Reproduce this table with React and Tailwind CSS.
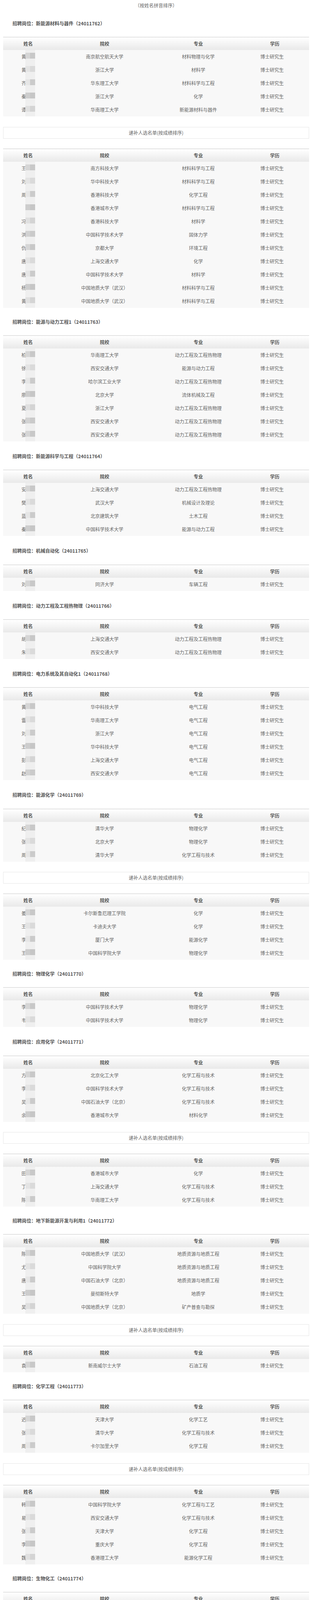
import React from "react";

const D = "博士研究生";
const M = "硕士研究生";

const blocks = [
  {
    h: "招聘岗位：新能源材料与器件（24011762）",
    t: [
      ["黄", "南京航空航天大学", "材料物理与化学", D],
      ["黄", "浙江大学", "材料学", D],
      ["齐", "华东理工大学", "材料科学与工程", D],
      ["秦", "浙江大学", "化学", D],
      ["谭", "华南理工大学", "新能源材料与器件", D],
    ],
    a: [
      ["王", "南方科技大学", "材料科学与工程", D],
      ["刘", "华中科技大学", "材料科学与工程", D],
      ["周", "香港科技大学", "化学工程", D],
      ["", "香港城市大学", "材料科学与工程", D],
      ["冯", "香港科技大学", "材料学", D],
      ["洪", "中国科学技术大学", "固体力学", D],
      ["仇", "京都大学", "环境工程", D],
      ["唐", "上海交通大学", "化学", D],
      ["唐", "中国科学技术大学", "材料学", D],
      ["杨", "中国地质大学（武汉）", "材料科学与工程", D],
      ["黄", "中国地质大学（武汉）", "材料科学与工程", D],
    ],
  },
  {
    h: "招聘岗位：能源与动力工程1（24011763）",
    t: [
      ["柏", "华南理工大学", "动力工程及工程热物理", D],
      ["徐", "西安交通大学", "能源与动力工程", D],
      ["李", "哈尔滨工业大学", "动力工程及工程热物理", D],
      ["廖", "北京大学", "流体机械及工程", D],
      ["夏", "浙江大学", "动力工程及工程热物理", D],
      ["张", "西安交通大学", "动力工程及工程热物理", D],
      ["张", "西安交通大学", "动力工程及工程热物理", D],
    ],
  },
  {
    h: "招聘岗位：新能源科学与工程（24011764）",
    t: [
      ["安", "上海交通大学", "动力工程及工程热物理", D],
      ["樊", "武汉大学", "机械设计及理论", D],
      ["蓝", "北京建筑大学", "土木工程", D],
      ["秦", "中国科学技术大学", "能源与动力工程", D],
    ],
  },
  {
    h: "招聘岗位：机械自动化（24011765）",
    t: [["刘", "同济大学", "车辆工程", D]],
  },
  {
    h: "招聘岗位：动力工程及工程热物理（24011766）",
    t: [
      ["胡", "上海交通大学", "动力工程及工程热物理", D],
      ["朱", "西安交通大学", "动力工程及工程热物理", D],
    ],
  },
  {
    h: "招聘岗位：电力系统及其自动化1（24011768）",
    t: [
      ["黄", "华中科技大学", "电气工程", D],
      ["雷", "华南理工大学", "电气工程", D],
      ["刘", "浙江大学", "电气工程", D],
      ["王", "华中科技大学", "电气工程", D],
      ["彭", "上海交通大学", "电气工程", D],
      ["赵", "西安交通大学", "电气工程", D],
    ],
  },
  {
    h: "招聘岗位：能源化学（24011769）",
    t: [
      ["纪", "清华大学", "物理化学", D],
      ["张", "北京大学", "物理化学", D],
      ["周", "清华大学", "化学工程与技术", D],
    ],
    a: [
      ["姜", "卡尔斯鲁厄理工学院", "化学", D],
      ["王", "卡迪夫大学", "化学", D],
      ["李", "厦门大学", "能源化学", D],
      ["王", "中国科学院大学", "物理化学", D],
    ],
  },
  {
    h: "招聘岗位：物理化学（24011770）",
    t: [
      ["李", "中国科学技术大学", "物理化学", D],
      ["韦", "中国科学技术大学", "物理化学", D],
    ],
  },
  {
    h: "招聘岗位：应用化学（24011771）",
    t: [
      ["方", "北京化工大学", "化学工程与技术", D],
      ["李", "中国科学技术大学", "化学工程与技术", D],
      ["吴", "中国石油大学（北京）", "化学工程与技术", D],
      ["余", "香港城市大学", "材料化学", D],
    ],
    a: [
      ["田", "香港城市大学", "化学", D],
      ["丁", "上海交通大学", "化学工程与技术", D],
      ["陈", "华南理工大学", "化学工程与技术", D],
    ],
  },
  {
    h: "招聘岗位：地下新能源开发与利用1（24011772）",
    t: [
      ["陈", "中国地质大学（武汉）", "地质资源与地质工程", D],
      ["尤", "中国科学院大学", "地质资源与地质工程", D],
      ["唐", "中国石油大学（北京）", "地质资源与地质工程", D],
      ["王", "曼彻斯特大学", "地质学", D],
      ["吴", "中国地质大学（北京）", "矿产普查与勘探", D],
    ],
    a: [["袁", "新南威尔士大学", "石油工程", D]],
  },
  {
    h: "招聘岗位：化学工程（24011773）",
    t: [
      ["迟", "天津大学", "化学工艺", D],
      ["张", "清华大学", "化学工程与技术", D],
      ["周", "卡尔加里大学", "化学工程", D],
    ],
    a: [
      ["韩", "中国科学院大学", "化学工程与工艺", D],
      ["易", "西安交通大学", "化学工程与技术", D],
      ["张", "天津大学", "化学工程", D],
      ["李", "重庆大学", "化学工程", D],
      ["魏", "香港理工大学", "能源化学工程", D],
    ],
  },
  {
    h: "招聘岗位：生物化工（24011774）",
    t: [["杨", "香港科技大学", "化学工程与技术", D]],
  },
  {
    h: "招聘岗位：检测技术与自动化装置（24011775）",
    t: [["周", "北京化工大学", "检测技术与自动化装置", D]],
  },
  {
    h: "招聘岗位：人工智能（24011776）",
    t: [["马", "香港中文大学（深圳）", "计算机科学与技术", D]],
  },
  {
    h: "招聘岗位：土木工程（24011777）",
    t: [
      ["王", "曼彻斯特大学", "土木工程", D],
      ["张", "香港理工大学", "土木、水利与海洋工程", D],
    ],
  },
  {
    h: "招聘岗位：能源与动力工程2（24011778）",
    t: [
      ["李", "曼彻斯特大学", "动力工程及工程热物理", M],
      ["王", "华北电力大学", "能源与动力工程", M],
      ["颜", "长沙理工大学", "新能源科学与工程", M],
    ],
    a: [
      ["胡", "浙江大学", "动力工程及工程热物理", M],
      ["马", "西安交通大学", "动力工程及工程热物理", M],
      ["孙", "西安交通大学", "动力工程及工程热物理", M],
      ["蔡", "华中科技大学", "动力工程及工程热物理", M],
      ["张", "清华大学", "海洋资源与环境", M],
      ["马", "华北电力大学", "动力工程及工程热物理", M],
    ],
  },
  {
    h: "招聘岗位：材料科学与工程（24011779）",
    t: [
      ["李", "爱丁堡大学", "材料化学", M],
      ["刘", "天津大学", "化学工程", M],
      ["孟", "北京理工大学", "能源化学工程", M],
      ["王", "西北工业大学", "应用化学", M],
      ["熊", "多伦多大学", "材料科学与工程", M],
      ["赵", "新加坡国立大学", "材料科学与工程", M],
    ],
    a: [
      ["林", "天津大学", "化学工艺", M],
      ["周", "中国科学技术大学", "材料科学与工程", M],
      ["林", "华南理工大学", "物理化学", M],
    ],
  },
  {
    h: "招聘岗位：能源经济评价（24011780）",
    t: [["肖", "斯德哥尔摩经济学院", "经济学", M]],
    a: [
      ["田", "伦敦大学学院", "资源与环境经济学", M],
      ["谢", "华中科技大学", "能源经济", M],
    ],
  },
  {
    h: "招聘岗位：电力系统及其自动化2（24011782）",
    t: [
      ["黄", "华中科技大学", "电气工程", M],
      ["邱", "新疆大学", "电气工程", M],
      ["王", "南京师范大学", "电气工程", M],
    ],
    a: [
      ["田", "香港大学", "智慧能源工程", M, "昀"],
      ["杜", "伯明翰大学", "电气工程及其自动化", M],
      ["刘", "华北电力大学", "电气工程", M],
      ["郭", "西安交通大学", "电气工程", M],
      ["卢", "华中科技大学", "电气工程", M],
      ["定", "华中科技大学", "电气工程", M],
      ["温", "浙江大学", "能源与动力工程", M],
    ],
  },
];

const blurTones = [
  ["bg-[#d6d6d6]", "bg-[#c8c8c8]"],
  ["bg-[#e4e4e4]", "bg-[#dadada]"],
  ["bg-[#e6e6e6]", "bg-[#cbcbcb]"],
  ["bg-[#cdcdcd]", "bg-[#c6c6c6]"],
  ["bg-[#e0e0e0]", "bg-[#d4d4d4]"],
  ["bg-[#d2d2d2]", "bg-[#cacaca]"],
];

function NameCell({ row, i }) {
  const tone = blurTones[i % blurTones.length];
  const wide = row[4] !== undefined;
  return (
    <div className="relative h-full">
      <span
        className={`absolute top-0 h-full flex items-center ${wide ? "left-[40px]" : "left-[47px]"}`}
      >
        {row[0]}
      </span>
      {wide && (
        <span className="absolute top-0 h-full flex items-center left-[76px]">{row[4]}</span>
      )}
      <span className="absolute left-[57px] top-[7px] flex">
        <span className={`block w-[12px] h-[15px] ${tone[0]}`}></span>
        <span className={`block w-[13px] h-[15px] ${tone[1]}`}></span>
      </span>
    </div>
  );
}

function Table({ rows }) {
  return (
    <div className="border-t-2 border-[#e2e2e2]">
      <div className="grid grid-cols-[128px_264px_216px_176px] h-[32px] items-center text-center font-bold text-[#555] bg-gradient-to-b from-white to-[#e9e9e9]">
        <div>姓名</div>
        <div>院校</div>
        <div>专业</div>
        <div>学历</div>
      </div>
      <div className="relative bg-[#f8f8f8]">
        <div className="absolute left-[57px] top-0 bottom-0 w-[25px] bg-[#efefef]"></div>
        {rows.map((r, i) => (
          <div
            key={i}
            className="relative grid grid-cols-[128px_264px_216px_176px] h-[34px] items-center text-center text-[#666]"
          >
            <NameCell row={r} i={i} />
            <div>{r[1]}</div>
            <div>{r[2]}</div>
            <div className="pr-[14px]">{r[3]}</div>
          </div>
        ))}
      </div>
    </div>
  );
}

function Heading({ text, first }) {
  return (
    <div
      className={`${first ? "pt-[22px]" : "pt-[26px]"} pb-[24.3px] pl-[24px] leading-[20px] text-[12px] font-bold text-[#555]`}
    >
      {text}
    </div>
  );
}

function AltBox() {
  return (
    <div className="mt-[26.5px] mb-[25px] h-[30px] border border-[#e6e6e6] bg-white flex items-center justify-center text-[#666]">
      递补人选名单(按成绩排序)
    </div>
  );
}

const mosaicA = [
  "bg-[#5c5c5c]", "bg-[#7a7a7a]", "bg-[#6a6a6a]", "bg-[#848484]", "bg-[#707070]", "bg-[#8a8a8a]",
  "bg-[#787878]", "bg-[#808080]", "bg-[#6e6e6e]", "bg-[#888888]", "bg-[#7c7c7c]", "bg-[#858585]",
  "bg-[#7a7b74]", "bg-[#868780]", "bg-[#787872]", "bg-[#6c6c6c]", "bg-[#4c4c4c]", "bg-[#6f6f6f]",
  "bg-[#686868]", "bg-[#7e7e7e]", "bg-[#555555]", "bg-[#747474]", "bg-[#6a6a6a]", "bg-[#5e5e5e]",
  "bg-[#666666]", "bg-[#777777]", "bg-[#80808a]", "bg-[#727272]", "bg-[#5a5a5a]", "bg-[#6a6a6a]",
  "bg-[#747474]", "bg-[#6e6e6e]", "bg-[#646464]", "bg-[#707070]", "bg-[#6a6a6a]",
];
const mosaicB = [
  "bg-[#5e5e5e]", "bg-[#727272]", "bg-[#5c5c5c]", "bg-[#7a7a7a]", "bg-[#646464]",
  "bg-[#5a5a5a]", "bg-[#7c7c7c]", "bg-[#747474]", "bg-[#828282]", "bg-[#6c6c6c]",
];

function Footer() {
  return (
    <div className="mt-[45px]">
      <div className="h-[1px] bg-[#e8e8e8]"></div>
      <div className="h-[21px] bg-white"></div>
      <div className="h-[15px] bg-[#d9d9d9]"></div>
      <div className="h-[60px] bg-[#3c3c3c] relative overflow-hidden">
        <div className="absolute left-0 top-[30px] flex h-[15px]">
          {mosaicA.map((c, i) => (
            <div key={i} className={`w-[15px] h-[15px] ${c}`}></div>
          ))}
        </div>
        <div className="absolute left-[586px] top-[15px] grid grid-cols-3 w-[44px]">
          <div className="h-[15px] bg-[#6e6e6e]"></div>
          <div className="h-[15px] bg-[#7c7c7c]"></div>
          <div className="h-[15px] bg-[#686868]"></div>
          <div className="h-[15px] bg-[#7a7a7a]"></div>
          <div className="h-[15px] bg-[#9a8a80]"></div>
          <div className="h-[15px] bg-[#7e7e7e]"></div>
          <div className="h-[15px] bg-[#8a8a8a]"></div>
          <div className="h-[15px] bg-[#909090]"></div>
          <div className="h-[15px] bg-[#808080]"></div>
        </div>
        <div className="absolute left-[630px] top-[30px] flex h-[15px]">
          {mosaicB.map((c, i) => (
            <div key={i} className={`w-[13.5px] h-[15px] ${c}`}></div>
          ))}
        </div>
      </div>
    </div>
  );
}

export default function App() {
  return (
    <div
      className="bg-white text-[12px] text-[#666]"
      style={{ fontFamily: '"Noto Sans CJK SC", "Noto Sans", sans-serif' }}
    >
      <div className="ml-[8px] w-[784px]">
        <div className="h-[28px] leading-[28px] text-center text-[#666]">（按姓名拼音排序）</div>
        {blocks.map((b, i) => (
          <div key={i}>
            <Heading text={b.h} first={i === 0} />
            <div className={b.a ? "" : "mb-[2px]"}>
              <Table rows={b.t} />
            </div>
            {b.a && (
              <>
                <AltBox />
                <Table rows={b.a} />
              </>
            )}
          </div>
        ))}
      </div>
      <Footer />
    </div>
  );
}
